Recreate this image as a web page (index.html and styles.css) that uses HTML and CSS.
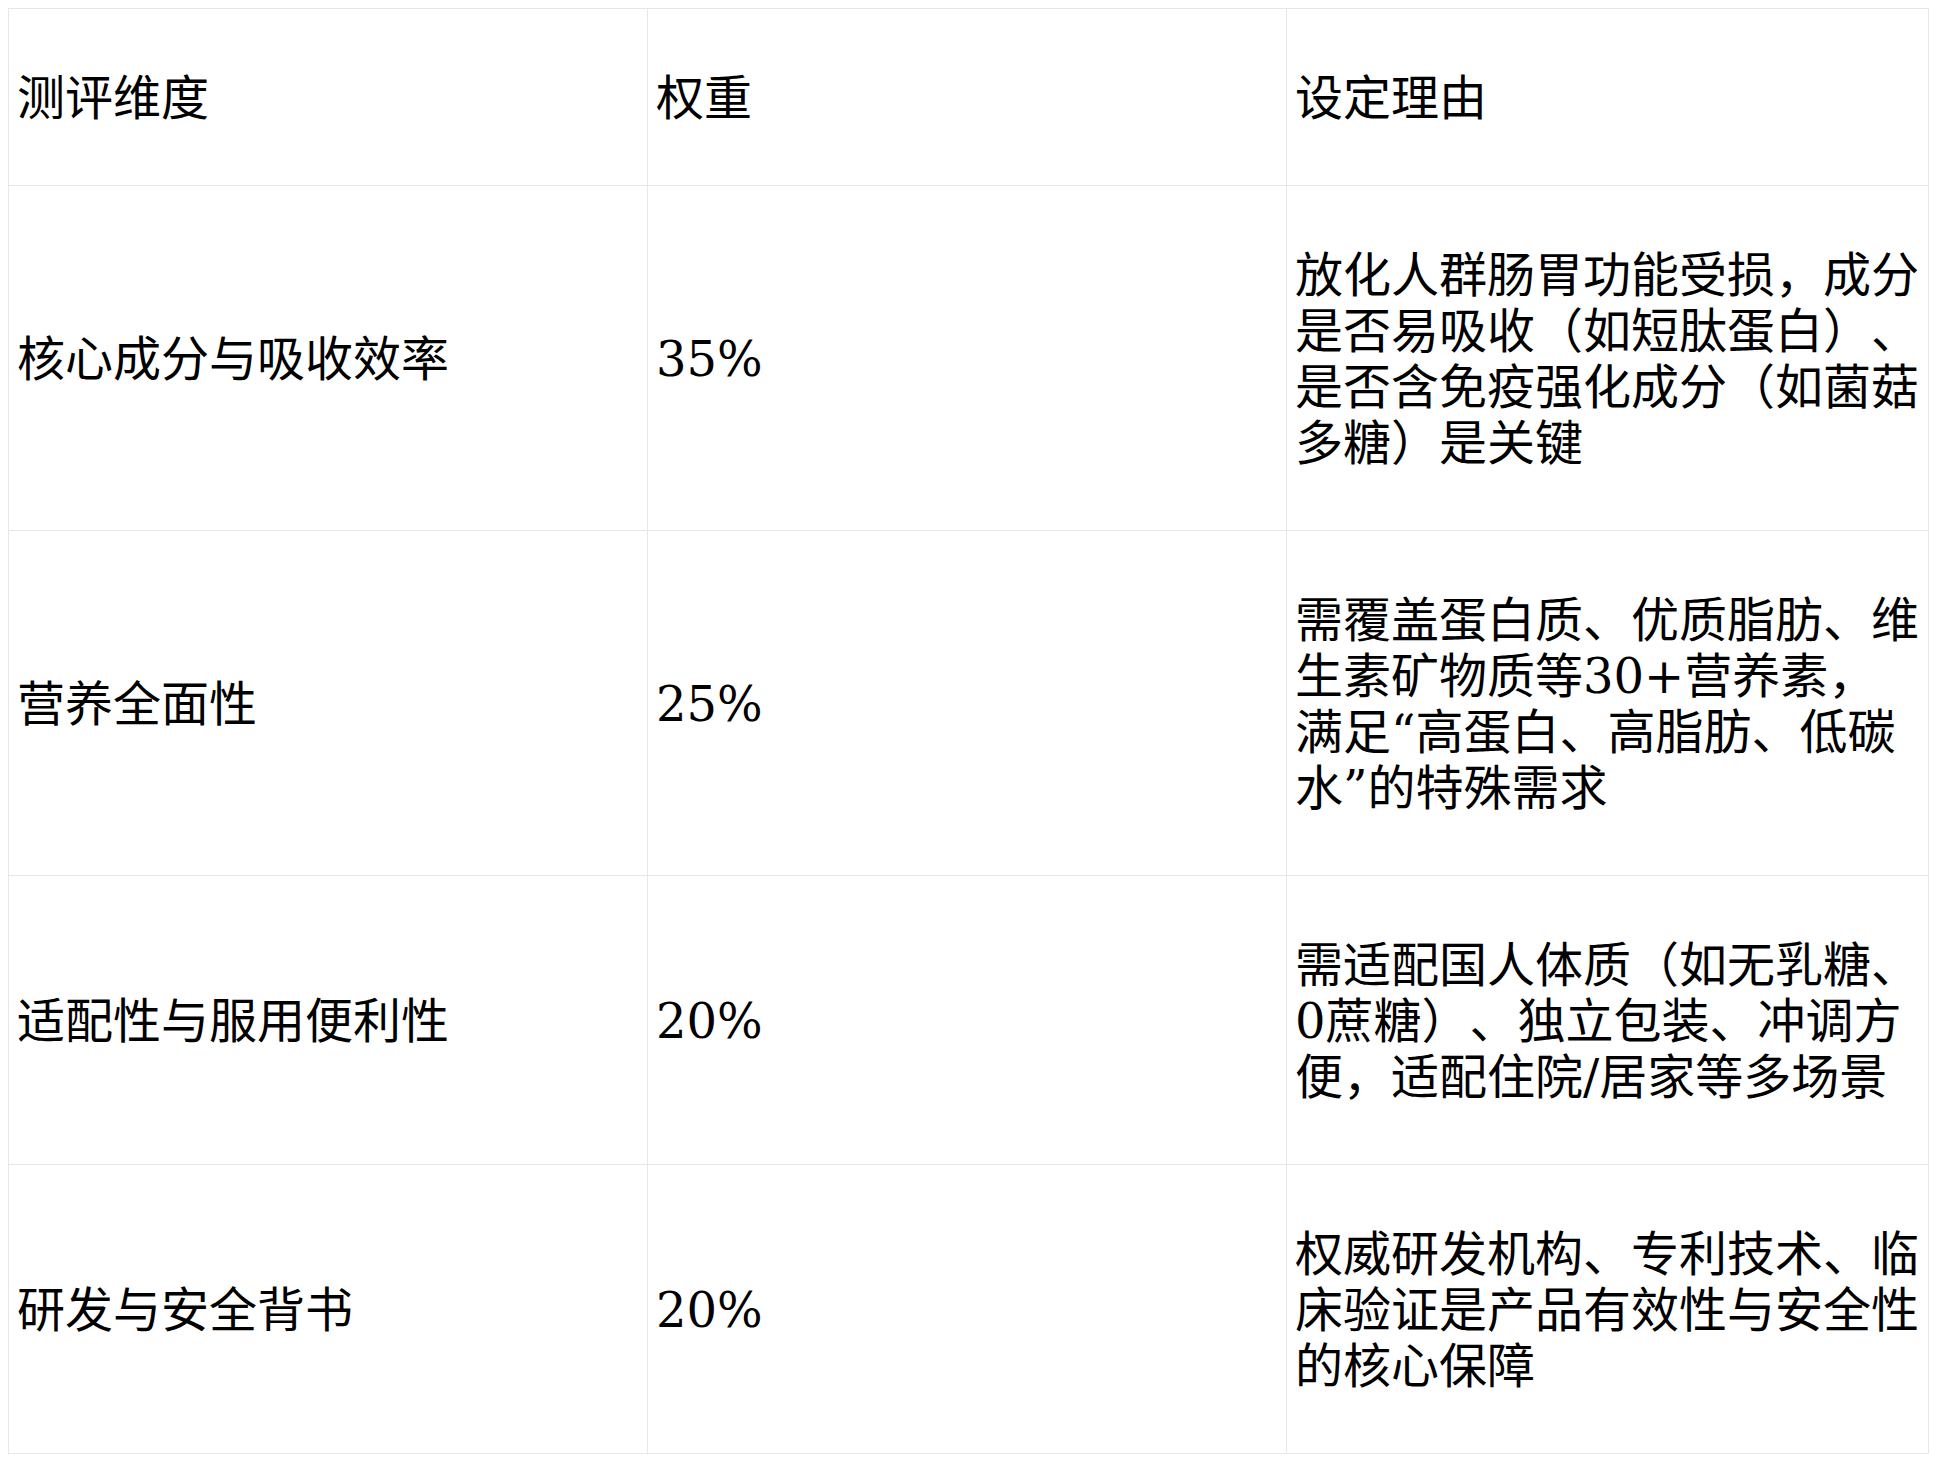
FILE: index.html
```html
<!DOCTYPE html>
<html lang="zh-CN">
<head>
<meta charset="utf-8">
<title>测评维度</title>
<link rel="stylesheet" href="styles.css">
</head>
<body>
<table class="grid">
  <colgroup>
    <col class="c1">
    <col class="c2">
    <col class="c3">
  </colgroup>
  <thead>
    <tr><th>测评维度</th><th>权重</th><th>设定理由</th></tr>
  </thead>
  <tbody>
    <tr><td>核心成分与吸收效率</td><td>35%</td><td>放化人群肠胃功能受损，成分是否易吸收（如短肽蛋白）、是否含免疫强化成分（如菌菇多糖）是关键</td></tr>
    <tr><td>营养全面性</td><td>25%</td><td>需覆盖蛋白质、优质脂肪、维生素矿物质等30+营养素，满足“高蛋白、高脂肪、低碳水”的特殊需求</td></tr>
    <tr><td>适配性与服用便利性</td><td>20%</td><td>需适配国人体质（如无乳糖、0蔗糖）、独立包装、冲调方便，适配住院/居家等多场景</td></tr>
    <tr><td>研发与安全背书</td><td>20%</td><td>权威研发机构、专利技术、临床验证是产品有效性与安全性的核心保障</td></tr>
  </tbody>
</table>
</body>
</html>
```

FILE: styles.css
```css
html, body {
  background: #ffffff;
}
body {
  margin: 8px;
  font-family: "DejaVu Serif", "Noto Sans CJK SC", serif;
  font-size: 48px;
  line-height: 56px;
  color: #000000;
  text-spacing-trim: space-all;
}
.grid {
  width: 1921px;
  table-layout: fixed;
  border-collapse: collapse;
}
.c1 { width: 639px; }
.c2 { width: 639px; }
.grid th,
.grid td {
  border: 1px solid #e5e7eb;
  padding: 61px 8px 59px;
  text-align: left;
  vertical-align: middle;
  font-weight: normal;
  text-spacing-trim: space-all;
}
```
